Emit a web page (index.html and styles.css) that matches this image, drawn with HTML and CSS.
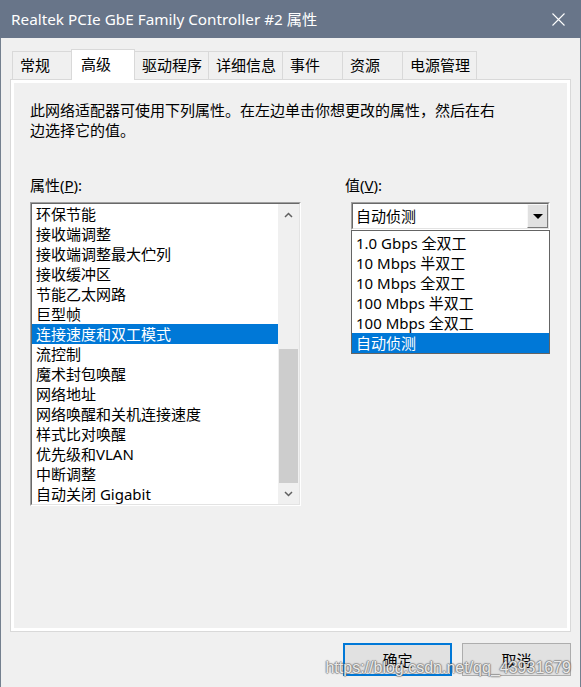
FILE: index.html
```html
<!DOCTYPE html>
<html>

<head>
    <meta charset="utf-8">
    <title>Realtek PCIe GbE Family Controller #2 属性</title>
    <link rel="stylesheet" href="styles.css">
</head>

<body>
    <div class="window">

        <!-- Title Bar -->
        <div class="title-bar">
            <span class="title">Realtek PCIe GbE Family Controller #2 属性</span>
            <svg class="close" width="13" height="13" viewBox="0 0 13 13">
                <path d="M0.5 0.5L12.5 12.5M12.5 0.5L0.5 12.5" stroke="#fff" stroke-width="1.1" fill="none" />
            </svg>
        </div>

        <div class="frame">
            <!-- Tabs -->
            <div class="tabs">
                <div class="tab first">常规</div>
                <div class="tab active">高级</div>
                <div class="tab">驱动程序</div>
                <div class="tab">详细信息</div>
                <div class="tab">事件</div>
                <div class="tab">资源</div>
                <div class="tab">电源管理</div>
            </div>

            <!-- Tab Page -->
            <div class="panel">
                <div class="page">
                    <p class="desc">此网络适配器可使用下列属性。在左边单击你想更改的属性，然后在右边选择它的值。</p>

                    <div class="fields">
                        <div class="prop-col">
                            <div class="label">属性(<u>P</u>):</div>
                            <div class="listbox">
                                <div class="listbox-inner">
                                    <ul class="items">
                                        <li>环保节能</li>
                                        <li>接收端调整</li>
                                        <li>接收端调整最大伫列</li>
                                        <li>接收缓冲区</li>
                                        <li>节能乙太网路</li>
                                        <li>巨型帧</li>
                                        <li class="selected">连接速度和双工模式</li>
                                        <li>流控制</li>
                                        <li>魔术封包唤醒</li>
                                        <li>网络地址</li>
                                        <li>网络唤醒和关机连接速度</li>
                                        <li>样式比对唤醒</li>
                                        <li>优先级和VLAN</li>
                                        <li>中断调整</li>
                                        <li>自动关闭 Gigabit</li>
                                    </ul>
                                    <div class="scrollbar">
                                        <div class="sb-btn">
                                            <svg width="9" height="6" viewBox="0 0 9 6">
                                                <polyline points="1,5 4.5,1.5 8,5" stroke="#606060" stroke-width="1.5" fill="none" />
                                            </svg>
                                        </div>
                                        <div class="sb-track">
                                            <div class="sb-thumb"></div>
                                        </div>
                                        <div class="sb-btn">
                                            <svg width="9" height="6" viewBox="0 0 9 6">
                                                <polyline points="1,1 4.5,4.5 8,1" stroke="#606060" stroke-width="1.5" fill="none" />
                                            </svg>
                                        </div>
                                    </div>
                                </div>
                            </div>
                        </div>

                        <div class="value-col">
                            <div class="label">值(<u>V</u>):</div>
                            <div class="combo">
                                <div class="combo-inner">
                                    <span class="combo-text">自动侦测</span>
                                    <div class="combo-btn">
                                        <svg width="10" height="5" viewBox="0 0 10 5">
                                            <polygon points="0,0 10,0 5,5" fill="#000" />
                                        </svg>
                                    </div>
                                </div>
                            </div>
                            <ul class="droplist">
                                <li>1.0 Gbps 全双工</li>
                                <li>10 Mbps 半双工</li>
                                <li>10 Mbps 全双工</li>
                                <li>100 Mbps 半双工</li>
                                <li>100 Mbps 全双工</li>
                                <li class="selected">自动侦测</li>
                            </ul>
                        </div>
                    </div>
                </div>
            </div>

            <!-- Dialog Buttons -->
            <div class="buttons">
                <button class="btn default">确定</button>
                <button class="btn">取消</button>
            </div>
        </div>

        <div class="watermark">https://blog.csdn.net/qq_43931679</div>
    </div>
</body>

</html>
```

FILE: styles.css
```css
body {
    margin: 0;
    background-color: #f0f0f0;
    font-family: "Noto Sans", "Noto Sans CJK SC", sans-serif;
    font-size: 15px;
    color: #000;
}

.window {
    position: relative;
    width: 581px;
    height: 687px;
    background-color: #f0f0f0;
    overflow: hidden;
}

.title-bar {
    display: flex;
    align-items: center;
    height: 38px;
    padding-left: 11px;
    background-color: #687589;
    color: #fff;
}

.title {
    font-size: 15.3px;
    line-height: 20px;
}

.close {
    margin-left: auto;
    margin-right: 16px;
}

.frame {
    height: 649px;
    box-sizing: border-box;
    border-left: 1px solid #74808f;
    border-right: 1px solid #74808f;
    padding: 11px 9px 0;
}

/* tabs */
.tabs {
    display: flex;
    align-items: flex-end;
    height: 30px;
    padding-left: 2px;
}

.tab {
    box-sizing: border-box;
    height: 28px;
    min-width: 61px;
    padding: 0 6px 0 7px;
    margin-right: -1px;
    border: 1px solid #d9d9d9;
    border-bottom: none;
    line-height: 27px;
    white-space: nowrap;
}

.tab.first {
    min-width: 60px;
}

.tab.active {
    position: relative;
    z-index: 1;
    height: 31px;
    min-width: 64px;
    padding-left: 9px;
    margin-bottom: -1px;
    background-color: #fff;
    line-height: 28px;
}

.panel {
    height: 553px;
    box-sizing: border-box;
    border: 1px solid #d9d9d9;
    background-color: #fff;
    padding: 3px;
}

.page {
    height: 100%;
    box-sizing: border-box;
    padding: 17px 16px 0;
    background-color: #f0f0f0;
}

.desc {
    margin: 0;
    width: 470px;
    line-height: 20px;
}

.fields {
    display: flex;
    margin-top: 35px;
}

.label {
    height: 20px;
    line-height: 20px;
}

/* property list */
.prop-col {
    width: 271px;
}

.listbox {
    height: 304px;
    margin-top: 7px;
    box-sizing: border-box;
    border: 1px solid;
    border-color: #a0a0a0 #fff #fff #a0a0a0;
}

.listbox-inner {
    display: flex;
    height: 100%;
    box-sizing: border-box;
    border: 1px solid;
    border-color: #696969 #e3e3e3 #e3e3e3 #696969;
    background-color: #fff;
}

.items,
.droplist {
    list-style: none;
    margin: 0;
    padding: 0;
}

.items {
    flex: 1;
}

.items li,
.droplist li {
    height: 20px;
    line-height: 20px;
    padding-left: 4px;
    white-space: nowrap;
    overflow: hidden;
}

.items li.selected,
.droplist li.selected {
    background-color: #0078d7;
    color: #fff;
}

.scrollbar {
    display: flex;
    flex-direction: column;
    width: 21px;
    background-color: #f0f0f0;
}

.sb-btn {
    display: flex;
    align-items: center;
    justify-content: center;
    height: 21px;
}

.sb-track {
    flex: 1;
    display: flex;
    flex-direction: column;
    justify-content: flex-end;
}

.sb-thumb {
    height: 134px;
    margin: 0 1px;
    background-color: #cdcdcd;
}

/* value combo */
.value-col {
    margin-left: 44px;
}

.combo {
    width: 199px;
    height: 28px;
    margin: 7px 0 0 6px;
    box-sizing: border-box;
    border: 1px solid;
    border-color: #a0a0a0 #fff #fff #a0a0a0;
}

.combo-inner {
    display: flex;
    height: 100%;
    box-sizing: border-box;
    border: 1px solid;
    border-color: #696969 #e3e3e3 #e3e3e3 #696969;
    background-color: #fff;
}

.combo-text {
    flex: 1;
    padding-left: 3px;
    line-height: 24px;
}

.combo-btn {
    display: flex;
    align-items: center;
    justify-content: center;
    width: 21px;
    box-sizing: border-box;
    background-color: #e1e1e1;
    border: 1px solid;
    border-color: #f8f8f8 #7a7a7a #7a7a7a #f8f8f8;
}

.droplist {
    width: 199px;
    margin-left: 6px;
    box-sizing: border-box;
    border: 1px solid #646464;
    padding-top: 2px;
    background-color: #fff;
}

/* dialog buttons */
.buttons {
    display: flex;
    justify-content: flex-end;
    gap: 10px;
    margin-top: 11px;
}

.btn {
    width: 109px;
    height: 33px;
    padding: 0;
    font: inherit;
    color: #000;
    background-color: #e1e1e1;
    border: 1px solid #adadad;
}

.btn.default {
    border: 2px solid #0078d7;
}

.watermark {
    position: absolute;
    top: 659px;
    right: 10px;
    font-family: "Liberation Sans", Arial, sans-serif;
    font-size: 16px;
    color: rgba(255, 255, 255, 0.85);
    text-shadow: 1px 0 1px rgba(90, 90, 90, 0.5), -1px 0 1px rgba(90, 90, 90, 0.5), 0 1px 1px rgba(90, 90, 90, 0.5), 0 -1px 1px rgba(90, 90, 90, 0.5);
}
```
